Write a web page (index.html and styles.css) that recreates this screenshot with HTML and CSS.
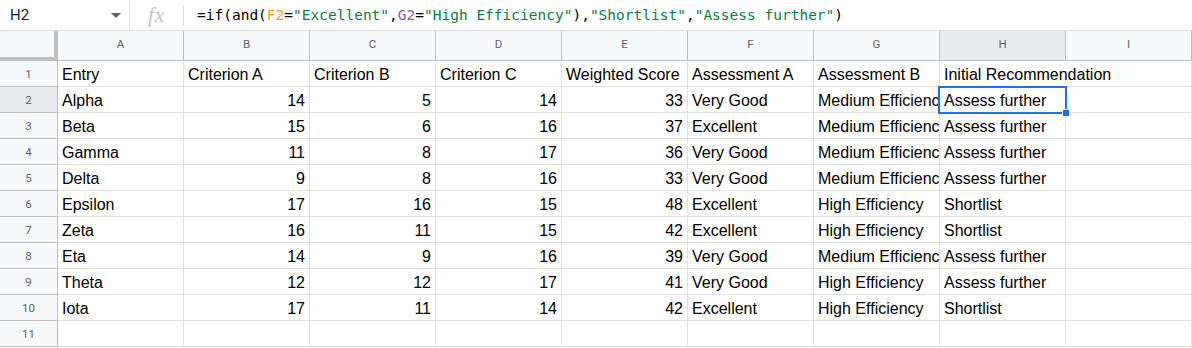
FILE: index.html
```html
<!DOCTYPE html>
<html lang="en">
<head>
    <meta charset="UTF-8">
    <title>Sheet</title>
    <link rel="stylesheet" href="styles.css">
</head>
<body>
    <div class="formula-bar">
        <div class="name-box">
            <span class="cell-ref">H2</span>
            <span class="caret"></span>
        </div>
        <div class="fx">fx</div>
        <div class="formula">=if(and(<span class="r1">F2</span>=<span class="str">"Excellent"</span>,<span class="r2">G2</span>=<span class="str">"High Efficiency"</span>),<span class="str">"Shortlist"</span>,<span class="str">"Assess further"</span>)</div>
    </div>

    <div class="grid">
        <div class="corner"></div>
        <div class="col-head">A</div>
        <div class="col-head">B</div>
        <div class="col-head">C</div>
        <div class="col-head">D</div>
        <div class="col-head">E</div>
        <div class="col-head">F</div>
        <div class="col-head">G</div>
        <div class="col-head active">H</div>
        <div class="col-head">I</div>

        <div class="row-head">1</div>
        <div class="cell">Entry</div>
        <div class="cell">Criterion A</div>
        <div class="cell">Criterion B</div>
        <div class="cell">Criterion C</div>
        <div class="cell">Weighted Score</div>
        <div class="cell">Assessment A</div>
        <div class="cell">Assessment B</div>
        <div class="cell wide">Initial Recommendation</div>

        <div class="row-head active">2</div>
        <div class="cell">Alpha</div>
        <div class="cell num">14</div>
        <div class="cell num">5</div>
        <div class="cell num">14</div>
        <div class="cell num">33</div>
        <div class="cell">Very Good</div>
        <div class="cell">Medium Efficiency</div>
        <div class="cell selected">Assess further<span class="handle"></span></div>
        <div class="cell"></div>

        <div class="row-head">3</div>
        <div class="cell">Beta</div>
        <div class="cell num">15</div>
        <div class="cell num">6</div>
        <div class="cell num">16</div>
        <div class="cell num">37</div>
        <div class="cell">Excellent</div>
        <div class="cell">Medium Efficiency</div>
        <div class="cell">Assess further</div>
        <div class="cell"></div>

        <div class="row-head">4</div>
        <div class="cell">Gamma</div>
        <div class="cell num">11</div>
        <div class="cell num">8</div>
        <div class="cell num">17</div>
        <div class="cell num">36</div>
        <div class="cell">Very Good</div>
        <div class="cell">Medium Efficiency</div>
        <div class="cell">Assess further</div>
        <div class="cell"></div>

        <div class="row-head">5</div>
        <div class="cell">Delta</div>
        <div class="cell num">9</div>
        <div class="cell num">8</div>
        <div class="cell num">16</div>
        <div class="cell num">33</div>
        <div class="cell">Very Good</div>
        <div class="cell">Medium Efficiency</div>
        <div class="cell">Assess further</div>
        <div class="cell"></div>

        <div class="row-head">6</div>
        <div class="cell">Epsilon</div>
        <div class="cell num">17</div>
        <div class="cell num">16</div>
        <div class="cell num">15</div>
        <div class="cell num">48</div>
        <div class="cell">Excellent</div>
        <div class="cell">High Efficiency</div>
        <div class="cell">Shortlist</div>
        <div class="cell"></div>

        <div class="row-head">7</div>
        <div class="cell">Zeta</div>
        <div class="cell num">16</div>
        <div class="cell num">11</div>
        <div class="cell num">15</div>
        <div class="cell num">42</div>
        <div class="cell">Excellent</div>
        <div class="cell">High Efficiency</div>
        <div class="cell">Shortlist</div>
        <div class="cell"></div>

        <div class="row-head">8</div>
        <div class="cell">Eta</div>
        <div class="cell num">14</div>
        <div class="cell num">9</div>
        <div class="cell num">16</div>
        <div class="cell num">39</div>
        <div class="cell">Very Good</div>
        <div class="cell">Medium Efficiency</div>
        <div class="cell">Assess further</div>
        <div class="cell"></div>

        <div class="row-head">9</div>
        <div class="cell">Theta</div>
        <div class="cell num">12</div>
        <div class="cell num">12</div>
        <div class="cell num">17</div>
        <div class="cell num">41</div>
        <div class="cell">Very Good</div>
        <div class="cell">High Efficiency</div>
        <div class="cell">Assess further</div>
        <div class="cell"></div>

        <div class="row-head">10</div>
        <div class="cell">Iota</div>
        <div class="cell num">17</div>
        <div class="cell num">11</div>
        <div class="cell num">14</div>
        <div class="cell num">42</div>
        <div class="cell">Excellent</div>
        <div class="cell">High Efficiency</div>
        <div class="cell">Shortlist</div>
        <div class="cell"></div>

        <div class="row-head">11</div>
        <div class="cell"></div>
        <div class="cell"></div>
        <div class="cell"></div>
        <div class="cell"></div>
        <div class="cell"></div>
        <div class="cell"></div>
        <div class="cell"></div>
        <div class="cell"></div>
        <div class="cell"></div>
    </div>
</body>
</html>
```

FILE: styles.css
```css
* {
    box-sizing: border-box;
}
body {
    margin: 0;
    background: #fff;
    font-family: "Liberation Sans", Arial, sans-serif;
    color: #000;
    overflow: hidden;
}

/* formula bar */
.formula-bar {
    display: flex;
    align-items: center;
    height: 31px;
    border-bottom: 1px solid #e0e0e0;
}
.name-box {
    display: flex;
    align-items: center;
    width: 130px;
    height: 100%;
    padding: 0 8px 0 10px;
    border-right: 1px solid #e0e0e0;
}
.cell-ref {
    flex: 1;
    font-family: Roboto, "Liberation Sans", sans-serif;
    font-size: 15px;
    color: #202124;
}
.caret {
    width: 0;
    height: 0;
    border-left: 5px solid transparent;
    border-right: 5px solid transparent;
    border-top: 5px solid #5f6368;
}
.fx {
    display: flex;
    align-items: center;
    justify-content: center;
    width: 54px;
    height: 21px;
    border-right: 1px solid #e0e0e0;
    font-family: "Liberation Serif", serif;
    font-style: italic;
    font-size: 21px;
    color: #c6c6c6;
    letter-spacing: 1px;
}
.formula {
    padding-left: 13px;
    font-family: "DejaVu Sans Mono", "Liberation Mono", monospace;
    font-size: 14.5px;
    color: #000;
    white-space: nowrap;
}
.r1 { color: #f49d2e; }
.r2 { color: #9158b0; }
.str { color: #0b8043; }

/* grid */
.grid {
    display: grid;
    grid-template-columns: 58px repeat(9, 126px);
    grid-template-rows: 30px repeat(11, 26px);
}
.corner {
    background: #f8f9fa;
    border-right: 4px solid #c0c0c0;
    border-bottom: 4px solid #c0c0c0;
}
.col-head {
    display: flex;
    align-items: center;
    justify-content: center;
    padding-bottom: 3px;
    background: #f8f9fa;
    border-right: 1px solid #c0c0c0;
    border-bottom: 1px solid #c0c0c0;
    font-family: Roboto, "Liberation Sans", sans-serif;
    font-size: 11.5px;
    color: #5f6368;
}
.row-head {
    display: flex;
    align-items: center;
    justify-content: center;
    background: #f8f9fa;
    border-right: 1px solid #c0c0c0;
    border-bottom: 1px solid #c0c0c0;
    font-family: Roboto, "Liberation Sans", sans-serif;
    font-size: 11.5px;
    color: #5f6368;
}
.col-head.active,
.row-head.active {
    background: #e8eaed;
}
.cell {
    position: relative;
    padding: 5px 4px 0 4px;
    border-right: 1px solid #e2e2e3;
    border-bottom: 1px solid #e2e2e3;
    font-size: 16px;
    line-height: 18px;
    white-space: nowrap;
    overflow: hidden;
}
.cell.num {
    text-align: right;
}
.cell.wide {
    grid-column: span 2;
}
.cell.selected {
    overflow: visible;
    z-index: 2;
}
.cell.selected::before {
    content: "";
    position: absolute;
    left: -2px;
    top: -1px;
    right: -2px;
    bottom: -2px;
    border: 2px solid #1a73e8;
}
.handle {
    position: absolute;
    right: -5px;
    bottom: -5px;
    width: 8px;
    height: 8px;
    background: #1a73e8;
    border: 1px solid #fff;
}
```
